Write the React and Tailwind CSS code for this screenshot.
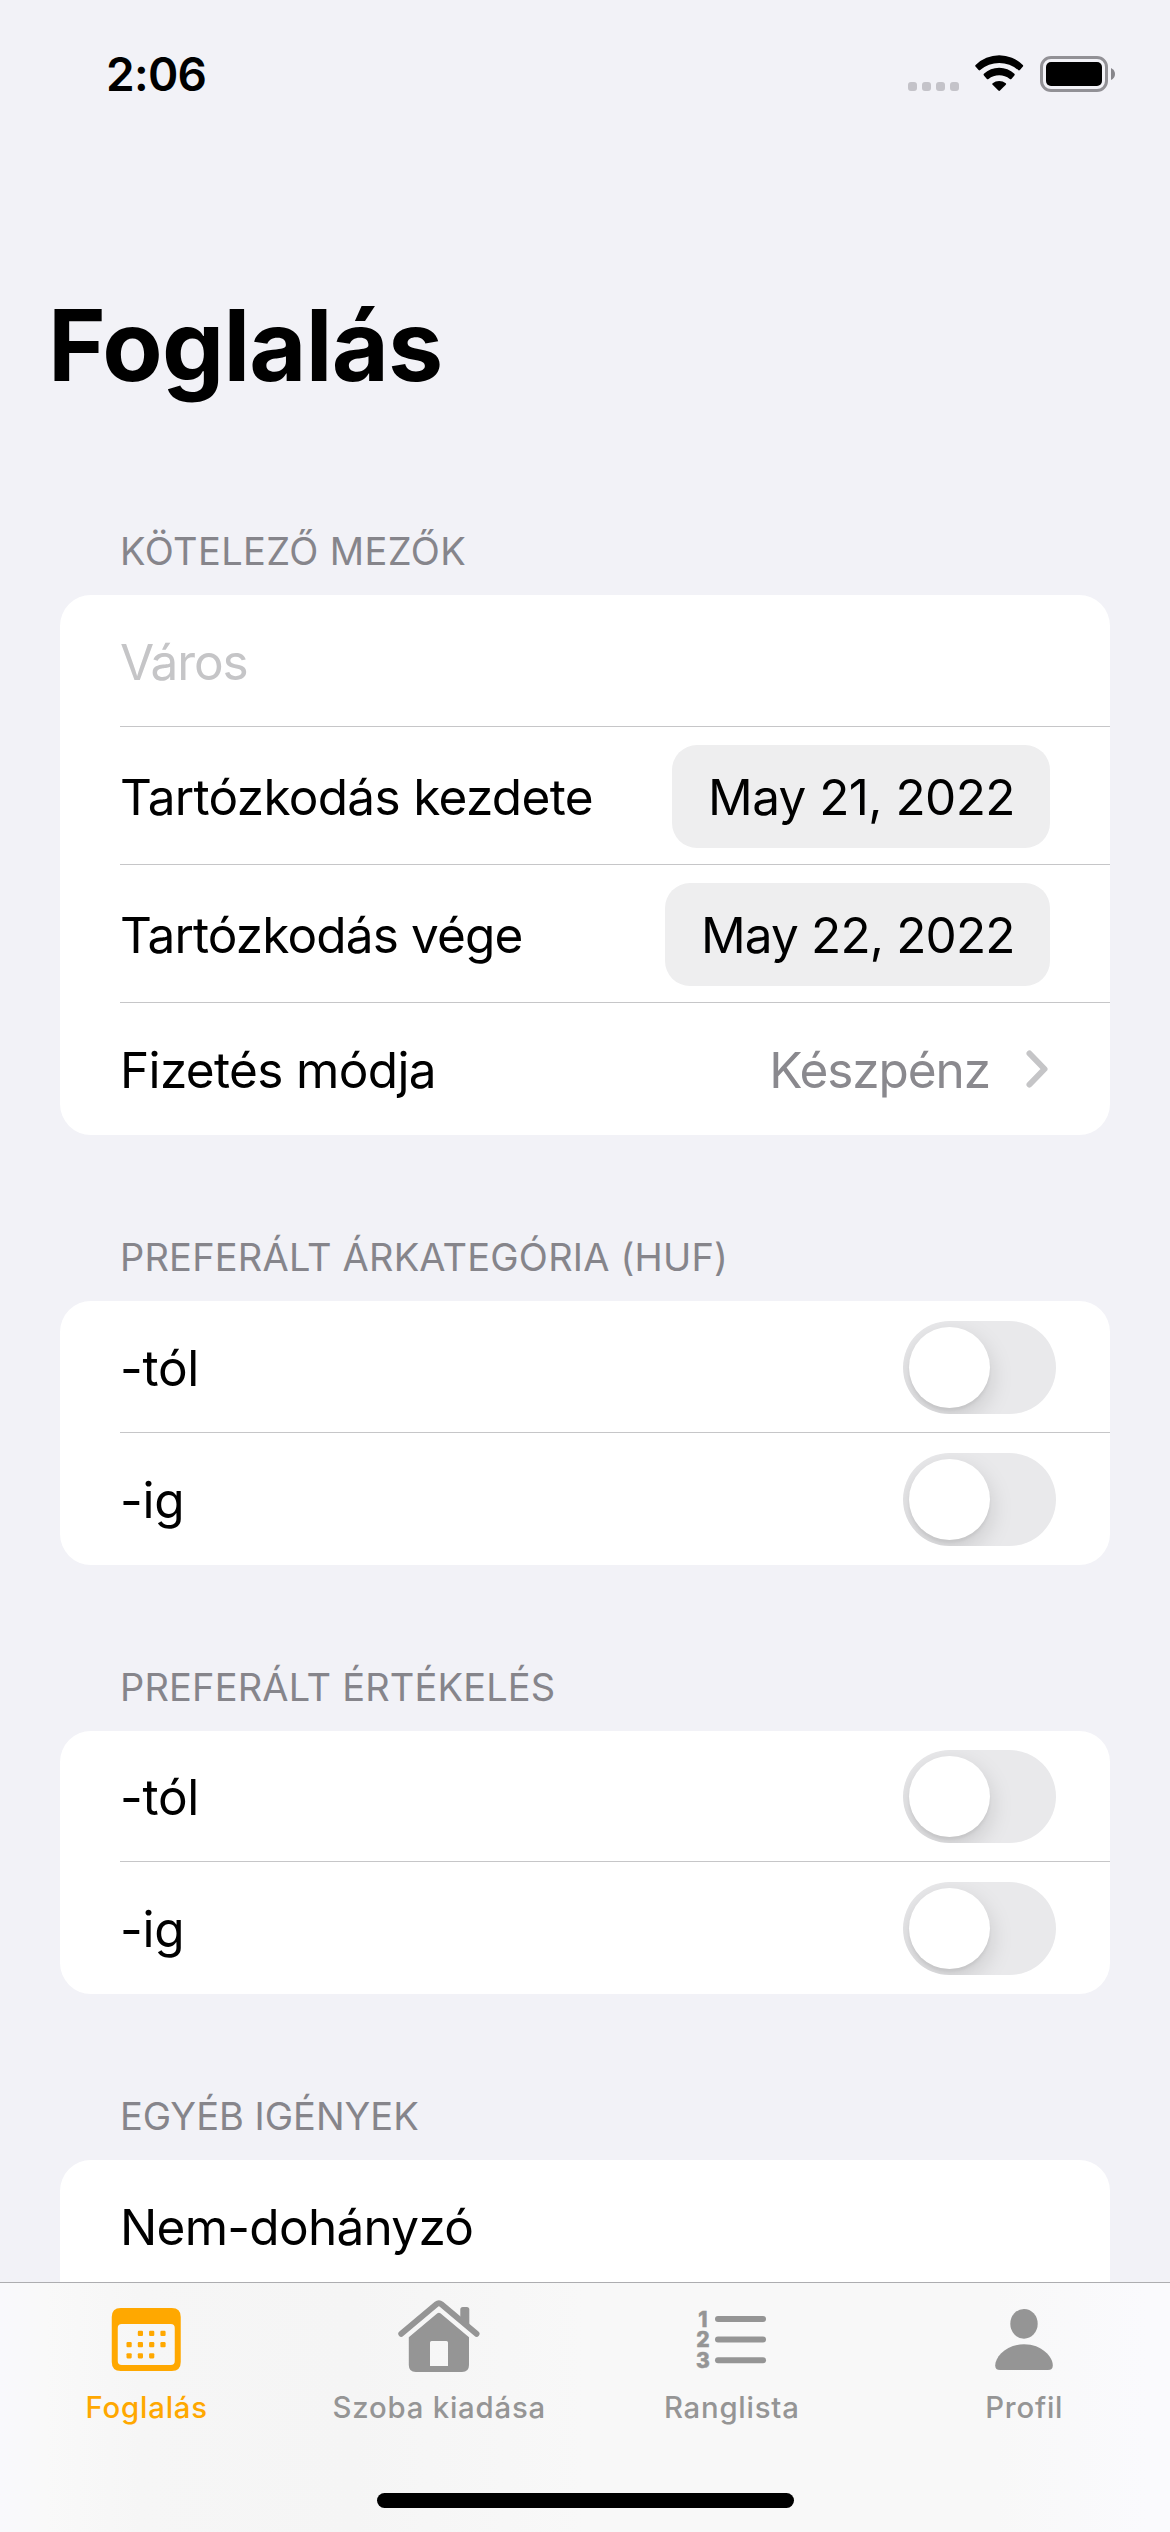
function StatusBar() {
  return (
    <header className="flex h-[132px] shrink-0 items-start justify-between pl-[106px] pr-[54px]">
      <time className="mt-[46px] text-[46px] font-semibold leading-[56px] tracking-[-0.7px]">2:06</time>
      <div className="mt-[55px] flex items-start">
        <div className="mr-4 mt-[27px] flex gap-[5px]">
          {[0, 1, 2, 3].map((n) => (
            <span key={n} className="size-[9px] shrink-0 rounded-[3px] bg-[#c4c3c9]" />
          ))}
        </div>
        <svg className="h-[37px] w-[49px]" viewBox="0 0 49 37">
          <path d="M0.6 9.9A33.7 33.7 0 0 1 47.8 9.9Q48.6 10.8 47.9 11.6L44.9 15Q44 15.8 43.2 15.1A28.6 28.6 0 0 0 5.2 15.1Q4.4 15.8 3.6 15L0.5 11.6Q-0.2 10.8 0.6 9.9Z" />
          <path d="M8.9 18.8A22.3 22.3 0 0 1 39.4 18.8Q40.2 19.6 39.4 20.5L36.4 23.9Q35.6 24.6 34.8 23.9A17 17 0 0 0 13.5 23.9Q12.7 24.6 11.9 23.9L8.9 20.5Q8.1 19.6 8.9 18.8Z" />
          <path d="M17.6 28.2A10.8 10.8 0 0 1 30.8 28.2Q31.6 28.9 30.8 29.8L25 35.6Q24.2 36.3 23.4 35.6L17.6 29.8Q16.8 28.9 17.6 28.2Z" />
        </svg>
        <svg className="ml-4 h-[37px] w-[76px]" viewBox="0 0 76 37">
          <rect x="1.5" y="2.5" width="65" height="33" rx="9.5" fill="none" stroke="#929196" strokeWidth="3" />
          <rect x="6" y="7" width="56" height="24" rx="5" />
          <path d="M71 13Q75 15 75 19T71 25Z" fill="#87868b" />
        </svg>
      </div>
    </header>
  );
}

function Section({ title, first, children }) {
  return (
    <section className={first ? "mt-[123px]" : "mt-[99px]"}>
      <h2 className="pl-[60px] text-[38px] leading-[46px] text-[#86858b]">{title}</h2>
      <div className="mt-[21px] overflow-hidden rounded-[31px] bg-white pl-[60px]">{children}</div>
    </section>
  );
}

function Row({ label, className, children }) {
  return (
    <div className={"flex items-start justify-between border-[#c6c6c8] text-[49.5px] leading-[60px] " + className}>
      {label}
      {children}
    </div>
  );
}

function DateButton({ className, children }) {
  return (
    <button className={"-mt-[22px] mr-[60px] h-[103px] whitespace-nowrap rounded-[25px] bg-[#eeeeef] pb-[21px] pl-9 pt-[22px] text-left " + className}>
      {children}
    </button>
  );
}

function Toggle({ className }) {
  return (
    <button className={"mr-[54px] flex h-[93px] w-[153px] shrink-0 items-center overflow-hidden rounded-full bg-[#e9e9eb] pl-1.5 " + className}>
      <span className="size-[81px] rounded-full bg-white shadow-[0_9px_24px_rgba(0,0,0,0.15),0_3px_3px_rgba(0,0,0,0.05)]" />
    </button>
  );
}

function CalendarIcon() {
  return (
    <svg className="h-[84px] w-[92px]" viewBox="0 0 92 84" fill="#ffa800">
      <path
        fillRule="evenodd"
        d="M20.75 15H71.75Q80.75 15 80.75 24V69Q80.75 78 71.75 78H20.75Q11.75 78 11.75 69V24Q11.75 15 20.75 15ZM21.75 31Q17.75 31 17.75 35V68Q17.75 72 21.75 72H70.75Q74.75 72 74.75 68V35Q74.75 31 70.75 31Z"
      />
      {[
        [40.4, 40.4], [51.7, 40.4], [63, 40.4],
        [29.1, 51.7], [40.4, 51.7], [51.7, 51.7], [63, 51.7],
        [29.1, 62.8], [40.4, 62.8], [51.7, 62.8],
      ].map(([x, y]) => (
        <rect key={x + "-" + y} x={x - 2.6} y={y - 2.6} width="5.2" height="5.2" rx="1.1" />
      ))}
    </svg>
  );
}

function HouseIcon() {
  return (
    <svg className="h-[84px] w-[92px]" viewBox="0 0 92 84" fill="#959595">
      <path d="M8.3 40.7L43.4 11.3Q45.9 9.2 48.4 11.3L83.5 40.7" fill="none" stroke="#959595" strokeWidth="6" strokeLinecap="round" strokeLinejoin="round" />
      <path d="M67.3 27V16.5Q67.3 14 69.8 14H73.8Q76.3 14 76.3 16.5V35Z" />
      <path
        fillRule="evenodd"
        d="M15.8 44.3L44.4 20.3Q45.9 19 47.4 20.3L76 44.3V72Q76 79 69 79H22.8Q15.8 79 15.8 72ZM38.5 48Q37 48 37 49.5V73H55V49.5Q55 48 53.5 48Z"
      />
    </svg>
  );
}

function NumberedListIcon() {
  return (
    <svg className="h-[84px] w-[92px]" viewBox="0 0 92 84" fill="#959595">
      {[26, 46.6, 67.3].map((y, i) => (
        <g key={y}>
          <text x="17.9" y={y + 7.6} textAnchor="middle" fontSize="21" fontWeight="800" stroke="#959595" strokeWidth="0.5">
            {i + 1}
          </text>
          <rect x="30" y={y - 3} width="51" height="6" rx="3" />
        </g>
      ))}
    </svg>
  );
}

function PersonIcon() {
  return (
    <svg className="h-[84px] w-[92px]" viewBox="0 0 92 84" fill="#959595">
      <ellipse cx="46" cy="30.8" rx="13.7" ry="14.9" />
      <path d="M22 77Q17.2 77 17.2 72.5C17.2 64 28 51.3 46 51.3S74.8 64 74.8 72.5Q74.8 77 70 77Z" />
    </svg>
  );
}

function Tab({ icon, active, children }) {
  return (
    <a className={"flex flex-1 flex-col items-center " + (active ? "text-[#ffa800]" : "text-[#959595]")}>
      {icon}
      <span className="mt-[13px] pl-px text-[29.3px] font-medium leading-[35px] tracking-[0.8px]">{children}</span>
    </a>
  );
}

export default function App() {
  return (
    <div className="flex h-[2532px] w-[1170px] flex-col overflow-hidden bg-[#f2f2f7] font-['Inter',sans-serif] text-black">
      <StatusBar />
      <main className="min-h-0 flex-1 overflow-hidden px-[60px]">
        <h1 className="-ml-3 mt-[153px] text-[98.6px] font-bold leading-[120px] tracking-[-0.8px]">Foglalás</h1>

        <Section first title={<span className="tracking-[0.4px]">KÖTELEZŐ MEZŐK</span>}>
          <Row className="h-[132px] border-b pt-[37px]" label={<span className="tracking-[-1.1px] text-[#c5c5c7]">Város</span>} />
          <Row className="h-[138px] border-b pt-10" label={<span className="tracking-[-0.69px]">Tartózkodás kezdete</span>}>
            <DateButton className="w-[378px] tracking-[-0.58px]">May 21, 2022</DateButton>
          </Row>
          <Row className="h-[138px] border-b pt-10" label={<span className="tracking-[-0.87px]">Tartózkodás vége</span>}>
            <DateButton className="w-[385px] tracking-[-0.86px]">May 22, 2022</DateButton>
          </Row>
          <Row className="h-[132px] pt-[37px]" label={<span className="tracking-[-0.66px]">Fizetés módja</span>}>
            <span className="mr-[60px] flex text-[#8a898e]">
              <span className="tracking-[-1.07px]">Készpénz</span>
              <svg className="ml-[34px] mt-[9px] h-[40px] w-[26px]" viewBox="0 0 26 40" fill="none" stroke="#c5c5c7" strokeWidth="6" strokeLinecap="round" strokeLinejoin="round">
                <path d="M5.5 4.5L20.5 20L5.5 35.5" />
              </svg>
            </span>
          </Row>
        </Section>

        <Section title={<span className="tracking-[0.2px]">PREFERÁLT ÁRKATEGÓRIA (HUF)</span>}>
          <Row className="h-[132px] border-b pt-[37px]" label={<span className="tracking-[-0.3px]">-tól</span>}>
            <Toggle className="-mt-[17px]" />
          </Row>
          <Row className="h-[132px] pt-[37px]" label={<span className="tracking-[-0.3px]">-ig</span>}>
            <Toggle className="-mt-[17px]" />
          </Row>
        </Section>

        <Section title={<span className="tracking-[0.16px]">PREFERÁLT ÉRTÉKELÉS</span>}>
          <Row className="h-[131px] border-b pt-9" label={<span className="tracking-[-0.3px]">-tól</span>}>
            <Toggle className="-mt-[17px]" />
          </Row>
          <Row className="h-[132px] pt-[37px]" label={<span className="tracking-[-0.3px]">-ig</span>}>
            <Toggle className="-mt-[17px]" />
          </Row>
        </Section>

        <Section title="EGYÉB IGÉNYEK">
          <Row className="h-[160px] pt-[37px]" label={<span className="tracking-[-0.73px]">Nem-dohányzó</span>} />
        </Section>
      </main>

      <nav className="flex h-[250px] shrink-0 flex-col items-center border-t border-[#adadb0] bg-[linear-gradient(90deg,#f9f9fc_0%,#f9f9f9_4%,#f6f6f6_12%,#f5f5f5_30%,#f8f8f8_50%,#f8f8f8_85%,#fafafd_98%)]">
        <div className="flex w-full pt-2.5">
          <Tab active icon={<CalendarIcon />}>Foglalás</Tab>
          <Tab icon={<HouseIcon />}>Szoba kiadása</Tab>
          <Tab icon={<NumberedListIcon />}>Ranglista</Tab>
          <Tab icon={<PersonIcon />}>Profil</Tab>
        </div>
        <div className="mt-[68px] h-[15px] w-[417px] rounded-full bg-black" />
      </nav>
    </div>
  );
}
